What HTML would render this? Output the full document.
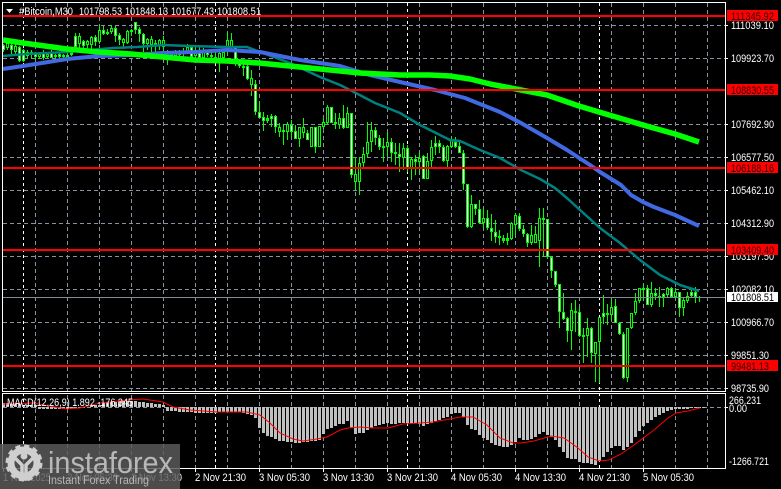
<!DOCTYPE html>
<html lang="en"><head><meta charset="utf-8"><title>#Bitcoin,M30</title>
<style>
html,body{margin:0;padding:0;background:#000}
svg{display:block}
text{font-family:"Liberation Sans",sans-serif;font-size:11px;fill:#fff}
.a text{fill:#fff}
.r text{fill:#300}
</style></head><body>
<svg width="781" height="489" viewBox="0 0 781 489" xmlns="http://www.w3.org/2000/svg">
<rect width="781" height="489" fill="#000"/>
<g shape-rendering="crispEdges">
<path d="M3 25.5H725M3 58.5H725M3 124.5H725M3 157.5H725M3 190.5H725M3 223.5H725M3 256.5H725M3 289.5H725M3 322.5H725M3 355.5H725M3 388.5H725M3 407.5H725" stroke="#8a94a0" stroke-width="1" stroke-dasharray="4 3" fill="none"/>
<path d="M35.5 3V468M67.5 3V468M99.5 3V468M131.5 3V468M163.5 3V468M195.5 3V468M227.5 3V468M259.5 3V468M291.5 3V468M323.5 3V468M355.5 3V468M387.5 3V468M419.5 3V468M451.5 3V468M483.5 3V468M515.5 3V468M547.5 3V468M579.5 3V468M611.5 3V468M643.5 3V468M675.5 3V468M707.5 3V468" stroke="#8a94a0" stroke-width="1" stroke-dasharray="4 3" fill="none"/>
<path d="M23.5 3V468M215.5 3V468M407.5 3V468M599.5 3V468" stroke="#fff" stroke-width="1" stroke-dasharray="3 3" fill="none"/>
<!-- histogram -->
<path fill="none" stroke="#c0c0c0" stroke-width="3" d="M3.5 407V403M7.5 407V403M11.5 407V404M15.5 407V404M19.5 407V404M23.5 407V405M27.5 407V405M31.5 407V405M35.5 407V405M39.5 407V409M43.5 407V409M47.5 407V409M51.5 407V409M55.5 407V409M59.5 407V409M63.5 407V409M67.5 407V409M71.5 407V409M75.5 407V408M79.5 407V408M83.5 407V408M91.5 407V406M95.5 407V405M99.5 407V405M103.5 407V403M107.5 407V402M111.5 407V402M115.5 407V402M119.5 407V401M123.5 407V401M127.5 407V401M131.5 407V401M135.5 407V401M139.5 407V402M143.5 407V402M147.5 407V403M151.5 407V403M155.5 407V404M159.5 407V404M163.5 407V405M167.5 407V411M171.5 407V411M175.5 407V411M179.5 407V412M183.5 407V412M187.5 407V412M191.5 407V412M195.5 407V413M199.5 407V413M203.5 407V413M207.5 407V413M211.5 407V413M215.5 407V413M219.5 407V412M223.5 407V412M227.5 407V412M231.5 407V412M235.5 407V412M239.5 407V412M243.5 407V413M247.5 407V414M251.5 407V415M255.5 407V418M259.5 407V428M263.5 407V433M267.5 407V436M271.5 407V437M275.5 407V439M279.5 407V441M283.5 407V441M287.5 407V442M291.5 407V442M295.5 407V443M299.5 407V443M303.5 407V442M307.5 407V442M311.5 407V441M315.5 407V441M319.5 407V440M323.5 407V434M327.5 407V429M331.5 407V428M335.5 407V426M339.5 407V424M343.5 407V424M347.5 407V421M351.5 407V428M355.5 407V434M359.5 407V433M363.5 407V433M367.5 407V430M371.5 407V428M375.5 407V426M379.5 407V425M383.5 407V424M387.5 407V423M391.5 407V424M395.5 407V424M399.5 407V423M403.5 407V423M407.5 407V423M411.5 407V423M415.5 407V423M419.5 407V424M423.5 407V426M427.5 407V424M431.5 407V423M435.5 407V421M439.5 407V420M443.5 407V418M447.5 407V417M451.5 407V414M455.5 407V413M459.5 407V413M463.5 407V417M467.5 407V425M471.5 407V429M475.5 407V430M479.5 407V435M483.5 407V438M487.5 407V440M491.5 407V443M495.5 407V445M499.5 407V446M503.5 407V447M507.5 407V447M511.5 407V445M515.5 407V442M519.5 407V438M523.5 407V440M527.5 407V440M531.5 407V439M535.5 407V437M539.5 407V434M543.5 407V432M547.5 407V435M551.5 407V437M555.5 407V440M559.5 407V447M563.5 407V452M567.5 407V458M571.5 407V459M575.5 407V459M579.5 407V462M583.5 407V463M587.5 407V463M591.5 407V464M595.5 407V465M599.5 407V461M603.5 407V457M607.5 407V452M611.5 407V448M615.5 407V446M619.5 407V446M623.5 407V450M627.5 407V447M631.5 407V443M635.5 407V437M639.5 407V431M643.5 407V426M647.5 407V423M651.5 407V420M655.5 407V417M659.5 407V415M663.5 407V413M667.5 407V411M671.5 407V410M675.5 407V409M679.5 407V409M683.5 407V409M687.5 407V409M691.5 407V408M695.5 407V408M699.5 407V408M703.5 407V408"/>
<!-- wicks -->
<path fill="none" stroke="#0f0" stroke-width="1" d="M3.5 44V52M7.5 42V50M11.5 44V54M15.5 43V56M19.5 46V62M23.5 49V62M27.5 50V58M31.5 50V58M35.5 52V60M39.5 52V59M43.5 50V60M47.5 52V58M51.5 50V58M55.5 54V60M59.5 52V58M63.5 54V58M67.5 53V58M71.5 50V56M75.5 33V48M79.5 33V48M83.5 40V50M87.5 40V48M91.5 36V50M95.5 35V46M99.5 25V44M103.5 26V35M107.5 29V35M111.5 25V34M115.5 26V42M119.5 33V45M123.5 38V49M127.5 30V44M131.5 29V36M135.5 22V34M139.5 27V42M143.5 33V52M147.5 38V50M151.5 36V52M155.5 40V54M159.5 39V50M163.5 36V52M167.5 50V65M171.5 52V60M175.5 50V60M179.5 50V58M183.5 48V58M187.5 44V54M191.5 45V58M195.5 48V60M199.5 47V60M203.5 48V60M207.5 50V57M211.5 52V60M215.5 52V60M219.5 50V72M223.5 50V60M227.5 32V55M231.5 33V50M235.5 47V66M239.5 60V68M243.5 62V76M247.5 65V80M251.5 70V96M255.5 80V115M259.5 102V118M263.5 112V131M267.5 115V123M271.5 114V127M275.5 115V133M279.5 123V137M283.5 124V145M287.5 122V140M291.5 120V138M295.5 125V139M299.5 127V147M303.5 118V138M307.5 130V140M311.5 127V147M315.5 127V153M319.5 126V147M323.5 118V129M327.5 105V125M331.5 107V123M335.5 113V129M339.5 113V129M343.5 105V129M347.5 107V128M351.5 113V178M355.5 157V190M359.5 157V195M363.5 147V167M367.5 122V158M371.5 122V152M375.5 127V145M379.5 135V150M383.5 138V162M387.5 132V157M391.5 138V162M395.5 143V165M399.5 143V172M403.5 143V170M407.5 145V172M411.5 157V180M415.5 155V175M419.5 152V173M423.5 155V179M427.5 153V179M431.5 140V168M435.5 136V155M439.5 140V153M443.5 145V162M447.5 145V168M451.5 137V148M455.5 137V148M459.5 140V153M463.5 150V190M467.5 184V228M471.5 195V228M475.5 204V215M479.5 200V224M483.5 208V228M487.5 210V230M491.5 214V241M495.5 220V243M499.5 230V245M503.5 235V243M507.5 233V245M511.5 222V240M515.5 213V235M519.5 213V231M523.5 225V237M527.5 233V247M531.5 225V245M535.5 226V243M539.5 208V267M543.5 208V257M547.5 219V258M551.5 256V278M555.5 271V287M559.5 284V328M563.5 293V320M567.5 317V342M571.5 303V350M575.5 300V332M579.5 307V337M583.5 328V363M587.5 318V357M591.5 327V363M595.5 342V382M599.5 317V383M603.5 295V324M607.5 304V325M611.5 300V320M615.5 299V323M619.5 322V335M623.5 332V379M627.5 328V382M631.5 313V329M635.5 293V315M639.5 288V303M643.5 284V300M647.5 285V305M651.5 282V307M655.5 288V300M659.5 287V307M663.5 293V307M667.5 287V298M671.5 287V298M675.5 288V298M679.5 292V317M683.5 297V316M687.5 292V303M691.5 288V298M695.5 287V303M699.5 296V302"/>
<!-- bodies -->
<path fill="none" stroke="#0f0" stroke-width="3" d="M3.5 45V50M7.5 43V48M11.5 45V50M15.5 46V52M19.5 47V61M23.5 50V61M27.5 52V56M31.5 52V55M35.5 53V57M39.5 54V57M43.5 52V58M47.5 54V57M51.5 52V58M55.5 55V57M59.5 54V57M63.5 55V57M67.5 55V57M71.5 52V55M75.5 36V47M79.5 36V44M83.5 41V46M87.5 41V45M91.5 37V45M95.5 37V42M99.5 30V42M103.5 30V34M107.5 32V34M111.5 28V32M115.5 28V36M119.5 35V40M123.5 39V43M127.5 31V43M131.5 30V32M135.5 22V30M139.5 29V34M143.5 34V44M147.5 39V44M151.5 39V45M155.5 43V45M159.5 40V45M163.5 40V47M167.5 55V57M171.5 54V57M175.5 53V56M179.5 51V55M183.5 51V54M187.5 47V53M191.5 47V57M195.5 50V56M199.5 50V58M203.5 50V58M207.5 52V55M211.5 55V57M215.5 57V59M219.5 53V60M223.5 52V58M227.5 40V50M231.5 40V47M235.5 47V60M239.5 63V66M243.5 66V68M247.5 66V79M251.5 78V85M255.5 84V112M259.5 112V118M263.5 117V121M267.5 118V121M271.5 116V119M275.5 116V127M279.5 127V132M283.5 130V132M287.5 124V132M291.5 125V132M295.5 131V139M299.5 127V139M303.5 127V133M307.5 133V140M311.5 127V147M315.5 127V147M319.5 126V147M323.5 122V127M327.5 107V123M331.5 107V123M335.5 122V124M339.5 118V125M343.5 118V128M347.5 113V128M351.5 113V175M355.5 174V182M359.5 163V182M363.5 154V163M367.5 142V154M371.5 130V142M375.5 130V138M379.5 138V147M383.5 146V148M387.5 142V147M391.5 142V153M395.5 152V154M399.5 154V157M403.5 148V158M407.5 148V168M411.5 159V169M415.5 159V162M419.5 158V162M423.5 156V179M427.5 161V179M431.5 147V161M435.5 143V147M439.5 143V147M443.5 147V161M447.5 146V161M451.5 140V147M455.5 142V147M459.5 146V153M463.5 153V184M467.5 184V227M471.5 204V227M475.5 204V209M479.5 209V223M483.5 218V223M487.5 218V228M491.5 228V232M495.5 232V237M499.5 236V238M503.5 238V241M507.5 238V241M511.5 223V239M515.5 215V225M519.5 216V229M523.5 229V234M527.5 234V243M531.5 235V243M535.5 234V243M539.5 218V241M543.5 218V220M547.5 219V257M551.5 257V271M555.5 271V285M559.5 284V312M563.5 312V319M567.5 318V331M571.5 310V331M575.5 311V313M579.5 312V336M583.5 335V337M587.5 328V336M591.5 328V353M595.5 342V354M599.5 317V342M603.5 313V317M607.5 313V315M611.5 307V315M615.5 306V323M619.5 323V334M623.5 334V378M627.5 328V378M631.5 313V328M635.5 301V313M639.5 288V301M643.5 288V290M647.5 288V305M651.5 293V305M655.5 293V296M659.5 296V298M663.5 294V297M667.5 288V295M671.5 288V297M675.5 292V297M679.5 292V308M683.5 300V308M687.5 296V301M691.5 292V296M695.5 292V297M699.5 297V298"/>
<!-- white centres -->
<path fill="none" stroke="#fff" stroke-width="1" d="M3.5 46V49M11.5 46V49M19.5 48V60M23.5 51V60M31.5 53V54M35.5 54V56M43.5 53V57M51.5 53V57M59.5 55V56M75.5 37V46M83.5 42V45M95.5 38V41M103.5 31V33M115.5 29V35M119.5 36V39M135.5 23V29M139.5 30V33M143.5 35V43M171.5 55V56M183.5 52V53M191.5 48V56M199.5 51V57M207.5 53V54M235.5 48V59M239.5 64V65M247.5 67V78M255.5 85V111M259.5 113V117M263.5 118V120M271.5 117V118M275.5 117V126M291.5 126V131M295.5 132V138M307.5 134V139M315.5 128V146M331.5 108V122M343.5 119V127M351.5 114V174M375.5 131V137M379.5 139V146M391.5 143V152M399.5 155V156M407.5 149V167M415.5 160V161M423.5 157V178M435.5 144V146M439.5 144V146M443.5 148V160M455.5 143V146M459.5 147V152M463.5 154V183M467.5 185V226M475.5 205V208M479.5 210V222M487.5 219V227M491.5 229V231M495.5 233V236M519.5 217V228M523.5 230V233M527.5 235V242M547.5 220V256M551.5 258V270M555.5 272V284M559.5 285V311M563.5 313V318M567.5 319V330M579.5 313V335M591.5 329V352M603.5 314V316M615.5 307V322M619.5 324V333M623.5 335V377M647.5 289V304M655.5 294V295M663.5 295V296M671.5 289V296M679.5 293V307M691.5 293V295M695.5 293V296"/>
<!-- black centres -->
<path fill="none" stroke="#000" stroke-width="1" d="M7.5 44V47M15.5 47V51M27.5 53V55M39.5 55V56M47.5 55V56M79.5 37V43M87.5 42V44M91.5 38V44M99.5 31V41M111.5 29V31M123.5 40V42M127.5 32V42M147.5 40V43M151.5 40V44M159.5 41V44M163.5 41V46M175.5 54V55M179.5 52V54M187.5 48V52M195.5 51V55M203.5 51V57M219.5 54V59M223.5 53V57M227.5 41V49M231.5 41V46M251.5 79V84M279.5 128V131M287.5 125V131M299.5 128V138M303.5 128V132M311.5 128V146M319.5 127V146M323.5 123V126M327.5 108V122M339.5 119V124M347.5 114V127M355.5 175V181M359.5 164V181M363.5 155V162M367.5 143V153M371.5 131V141M387.5 143V146M403.5 149V157M411.5 160V168M419.5 159V161M427.5 162V178M431.5 148V160M447.5 147V160M451.5 141V146M471.5 205V226M483.5 219V222M511.5 224V238M515.5 216V224M531.5 236V242M535.5 235V242M539.5 219V240M571.5 311V330M587.5 329V335M595.5 343V353M599.5 318V341M611.5 308V314M627.5 329V377M631.5 314V327M635.5 302V312M639.5 289V300M651.5 294V304M667.5 289V294M675.5 293V296M683.5 301V307M687.5 297V300"/>
</g>
<!-- moving averages -->
<polyline fill="none" stroke="#008080" stroke-width="2.5" stroke-linejoin="round" points="3,56 26,54 67,52 113,48 137,47 163,45 190,46 227,47 247,47 260,52 290,63 320,77 340,85 352,91 375,103 400,113 420,125 450,140 460,141 480,150 500,158 521,170 540,179 555,188 568,199 580,210 600,228 620,243 640,260 660,275 680,285 699,291"/>
<polyline fill="none" stroke="#4169e1" stroke-width="4" stroke-linejoin="round" points="3,69 23,66 67,59 99,56 131,55 163,53 195,52 227,50 260,52 300,60 340,66 370,75 400,82 435,90 465,98 500,112 521,123 547,138 567,150 590,165 600,172 621,185 631,195 643,202 654,207 675,215 699,226"/>
<polyline fill="none" stroke="#00ff00" stroke-width="5.5" stroke-linejoin="round" points="3,40 23,43 67,49 99,52 131,54 163,57 195,60 227,61 259,63 300,67 340,71 360,73 400,75 430,75 450,76 470,79 490,84 521,90 547,95 579,106 599,112 643,125 675,134 699,142"/>
<!-- MACD signal -->
<polyline fill="none" stroke="#f00" stroke-width="1" points="3,404 33,403 66,409 80,408 100,403 127,400 143,399 163,402 173,407 190,410 217,412 247,412 260,415 270,423 280,433 293,439 303,441 317,439 327,437 340,430 348,428 360,427 373,428 388,428 403,424 420,423 433,422 450,419 460,417 473,417 487,425 500,438 513,443 521,443 534,441 551,436 564,438 578,448 588,457 599,461 609,460 621,454 634,445 654,430 668,418 676,413 688,411 700,408"/>
<!-- horizontal levels -->
<g shape-rendering="crispEdges" fill="#f00">
<rect x="3" y="15" width="722" height="2"/><rect x="3" y="89" width="722" height="2"/><rect x="3" y="167" width="722" height="2"/><rect x="3" y="249" width="722" height="2"/><rect x="3" y="365" width="722" height="2"/>
<rect x="3" y="297" width="722" height="1" fill="#7f8c99"/>
</g>
<!-- frames -->
<g shape-rendering="crispEdges" fill="none" stroke="#fff" stroke-width="1">
<path d="M2.5 2.5H725.5V391.5H2.5ZM2.5 393.5H725.5V468.5H2.5Z"/>
<path d="M725 25.5h3M725 58.5h3M725 124.5h3M725 157.5h3M725 190.5h3M725 223.5h3M725 256.5h3M725 289.5h3M725 322.5h3M725 355.5h3M725 388.5h3M725 407.5h3M3.5 468v4M67.5 468v4M131.5 468v4M195.5 468v4M259.5 468v4M323.5 468v4M387.5 468v4M451.5 468v4M515.5 468v4M579.5 468v4M643.5 468v4"/>
</g>
<!-- title -->
<path d="M6 9h7l-3.5 4z" fill="#fff"/>
<text x="19" y="15" textLength="54" lengthAdjust="spacingAndGlyphs">#Bitcoin,M30</text>
<text x="79" y="15" textLength="43" lengthAdjust="spacingAndGlyphs">101798.53</text>
<text x="125" y="15" textLength="43" lengthAdjust="spacingAndGlyphs">101848.13</text>
<text x="171" y="15" textLength="43" lengthAdjust="spacingAndGlyphs">101677.43</text>
<text x="217" y="15" textLength="44" lengthAdjust="spacingAndGlyphs">101808.51</text>
<text x="7" y="406" textLength="126" lengthAdjust="spacingAndGlyphs">MACD(12,26,9) 1.892 -176.345</text>
<!-- price axis -->
<g class="a">
<text x="731" y="29" textLength="43" lengthAdjust="spacingAndGlyphs">111039.10</text>
<text x="731" y="62" textLength="43" lengthAdjust="spacingAndGlyphs">109923.70</text>
<text x="731" y="128" textLength="43" lengthAdjust="spacingAndGlyphs">107692.90</text>
<text x="731" y="161" textLength="43" lengthAdjust="spacingAndGlyphs">106577.50</text>
<text x="731" y="194" textLength="43" lengthAdjust="spacingAndGlyphs">105462.10</text>
<text x="731" y="227" textLength="43" lengthAdjust="spacingAndGlyphs">104312.90</text>
<text x="731" y="260" textLength="43" lengthAdjust="spacingAndGlyphs">103197.50</text>
<text x="731" y="293" textLength="43" lengthAdjust="spacingAndGlyphs">102082.10</text>
<text x="731" y="326" textLength="43" lengthAdjust="spacingAndGlyphs">100966.70</text>
<text x="731" y="359" textLength="38" lengthAdjust="spacingAndGlyphs">99851.30</text>
<text x="731" y="392" textLength="38" lengthAdjust="spacingAndGlyphs">98735.90</text>
<text x="729" y="404" textLength="32" lengthAdjust="spacingAndGlyphs">266.231</text>
<text x="729" y="412" textLength="18" lengthAdjust="spacingAndGlyphs">0.00</text>
<text x="729" y="465" textLength="40" lengthAdjust="spacingAndGlyphs">-1266.721</text>
</g>
<g shape-rendering="crispEdges" fill="#f00">
<rect x="727" y="10" width="51" height="11"/><rect x="727" y="84" width="51" height="11"/><rect x="727" y="162" width="51" height="11"/><rect x="727" y="244" width="51" height="11"/><rect x="727" y="360" width="51" height="11"/>
<rect x="727" y="292" width="51" height="10" fill="#fff"/>
</g>
<g class="r">
<text x="731" y="20" textLength="43" lengthAdjust="spacingAndGlyphs">111345.92</text>
<text x="731" y="94" textLength="43" lengthAdjust="spacingAndGlyphs">108830.55</text>
<text x="731" y="172" textLength="43" lengthAdjust="spacingAndGlyphs">106188.16</text>
<text x="731" y="254" textLength="43" lengthAdjust="spacingAndGlyphs">103409.40</text>
<text x="731" y="370" textLength="38" lengthAdjust="spacingAndGlyphs">99481.13</text>
</g>
<text x="731" y="301" textLength="43" lengthAdjust="spacingAndGlyphs" style="fill:#000">101808.51</text>
<!-- time axis -->
<text x="3" y="481" textLength="48" lengthAdjust="spacingAndGlyphs">1 Nov 2025</text>
<text x="67" y="481" textLength="51" lengthAdjust="spacingAndGlyphs">2 Nov 05:30</text>
<text x="131" y="481" textLength="51" lengthAdjust="spacingAndGlyphs">2 Nov 13:30</text>
<text x="195" y="481" textLength="51" lengthAdjust="spacingAndGlyphs">2 Nov 21:30</text>
<text x="259" y="481" textLength="51" lengthAdjust="spacingAndGlyphs">3 Nov 05:30</text>
<text x="323" y="481" textLength="51" lengthAdjust="spacingAndGlyphs">3 Nov 13:30</text>
<text x="387" y="481" textLength="51" lengthAdjust="spacingAndGlyphs">3 Nov 21:30</text>
<text x="451" y="481" textLength="51" lengthAdjust="spacingAndGlyphs">4 Nov 05:30</text>
<text x="515" y="481" textLength="51" lengthAdjust="spacingAndGlyphs">4 Nov 13:30</text>
<text x="579" y="481" textLength="51" lengthAdjust="spacingAndGlyphs">4 Nov 21:30</text>
<text x="643" y="481" textLength="51" lengthAdjust="spacingAndGlyphs">5 Nov 05:30</text>
<!-- watermark -->
<rect x="0" y="444" width="180" height="45" fill="#5a5a5a" fill-opacity=".84"/>
<g fill="none" stroke="#cfcfcf">
<circle cx="24" cy="463" r="13" stroke-width="7"/>
<circle cx="24" cy="463" r="16.5" stroke-width="4" stroke-dasharray="5 3.64"/>
</g>
<circle cx="24" cy="456" r="3.5" fill="#cfcfcf"/>
<path d="M14 457L22 465V479H26V465L34 457" fill="none" stroke="#cfcfcf" stroke-width="3.5"/>
<text x="48" y="473" textLength="125" lengthAdjust="spacingAndGlyphs" style="font-size:31px;fill:#b8b8b8">instaforex</text>
<text x="48" y="484" textLength="101" lengthAdjust="spacingAndGlyphs" style="font-size:12px;fill:#b8b8b8">Instant Forex Trading</text>
</svg>
</body></html>
